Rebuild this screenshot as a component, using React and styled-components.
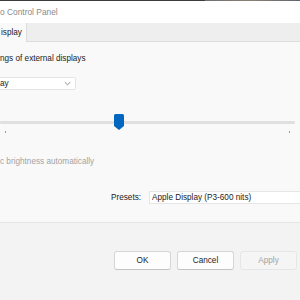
import React from 'react';
import styled, { createGlobalStyle } from 'styled-components';

const GlobalStyle = createGlobalStyle`
    html, body {
        margin: 0;
        padding: 0;
        background: #f9f9f9;
        overflow: hidden;
    }
    body {
        font-family: "Liberation Sans", Arial, sans-serif;
        font-size: 8.2px;
        color: #1b1b1b;
    }
`;

const Window = styled.div`
    width: 300px;
    height: 300px;
    display: flex;
    flex-direction: column;
    background: #f9f9f9;
    overflow: hidden;
`;

const TopEdge = styled.div`
    height: 1px;
    flex: none;
    background: linear-gradient(to right, #3b3b3b 0, #3b3b3b 205px, #6d6f78 205px, #8a8070 250px, #5d6470 300px);
`;

const TitleBar = styled.div`
    height: 22px;
    flex: none;
    display: flex;
    align-items: center;
    background: #ffffff;
    color: #8b8b8b;
    font-size: 8.4px;
    padding-left: 0;
    white-space: nowrap;
`;

const TabStrip = styled.div`
    height: 18px;
    flex: none;
    display: flex;
    background: #eeeeee;
    border-bottom: 1px solid #dedede;
`;

const Tab = styled.div`
    display: flex;
    align-items: center;
    padding: 0 4px 0 1px;
    background: #f9f9f9;
    border-right: 1px solid #dcdcdc;
    margin-bottom: -1px;
`;

const Body = styled.div`
    flex: 1;
    display: flex;
    flex-direction: column;
`;

const Heading = styled.div`
    line-height: 12px;
    margin-top: 11px;
    white-space: nowrap;
`;

const Dropdown = styled.div`
    width: 76px;
    height: 13px;
    margin-top: 12px;
    box-sizing: border-box;
    display: flex;
    align-items: center;
    justify-content: space-between;
    padding: 0 4px 0 0;
    background: #ffffff;
    border: 1px solid #e4e4e4;
    border-left: none;
    border-radius: 0 2px 2px 0;
`;

const SliderWrap = styled.div`
    width: 295px;
    margin-top: 23px;
    display: flex;
    flex-direction: column;
`;

const Track = styled.div`
    position: relative;
    height: 18px;
    display: flex;
    align-items: center;
`;

const Rail = styled.div`
    width: 100%;
    height: 3px;
    border-radius: 1px;
    background: #e0e0e0;
`;

const Thumb = styled.svg`
    position: absolute;
    top: 1px;
    width: 10px;
    height: 16px;
    margin-left: -5px;
`;

const Ticks = styled.div`
    display: flex;
    justify-content: space-between;
    padding: 0 5px;
    margin-top: 0;
`;

const Tick = styled.span`
    width: 1px;
    height: 2px;
    background: #9a9a9a;
`;

const AutoLabel = styled.div`
    color: #a3a3a3;
    line-height: 12px;
    margin-top: 23px;
    white-space: nowrap;
`;

const PresetRow = styled.div`
    display: flex;
    align-items: center;
    margin-top: 23px;
    padding-left: 111px;
`;

const PresetLabel = styled.span`
    width: 38px;
`;

const PresetBox = styled.div`
    flex: 1;
    height: 13px;
    box-sizing: border-box;
    display: flex;
    align-items: center;
    padding-left: 2px;
    background: #ffffff;
    border: 1px solid #e6e6e6;
    border-right: none;
`;

const Footer = styled.div`
    height: 78px;
    flex: none;
    box-sizing: border-box;
    display: flex;
    justify-content: flex-end;
    align-items: flex-start;
    gap: 6px;
    padding: 28px 3px 0 0;
    background: #f3f3f3;
    border-top: 1px solid #e5e5e5;
`;

const Button = styled.div`
    width: 57px;
    height: 19px;
    box-sizing: border-box;
    display: flex;
    align-items: center;
    justify-content: center;
    border-radius: 3px;
    background: ${p => (p.disabled ? '#f5f5f5' : '#fdfdfd')};
    color: ${p => (p.disabled ? '#a2a2a2' : '#1b1b1b')};
    border: 1px solid ${p => (p.disabled ? '#e6e6e6' : '#d6d6d6')};
    border-bottom-color: ${p => (p.disabled ? '#e6e6e6' : '#c4c4c4')};
`;

function Chevron() {
    return (
        <svg width="7" height="5" viewBox="0 0 7 5">
            <path d="M0.8 1.2 L3.5 3.8 L6.2 1.2" fill="none" stroke="#7d7d7d" strokeWidth="0.9" />
        </svg>
    );
}

export default function App() {
    const brightness = 40;

    return (
        <Window>
            <GlobalStyle />
            <TopEdge />
            <TitleBar>o Control Panel</TitleBar>
            <TabStrip>
                <Tab>isplay</Tab>
            </TabStrip>
            <Body>
                <Heading>ngs of external displays</Heading>
                <Dropdown>
                    <span>ay</span>
                    <Chevron />
                </Dropdown>
                <SliderWrap>
                    <Track>
                        <Rail />
                        <Thumb
                            viewBox="0 0 10 16"
                            style={{ left: `calc(5px + ${brightness}% * 285 / 295)` }}
                        >
                            <path d="M1.5 0 H8.5 Q10 0 10 1.5 V12 L5 16 L0 12 V1.5 Q0 0 1.5 0 Z" fill="#0067c0" />
                        </Thumb>
                    </Track>
                    <Ticks>
                        <Tick />
                        <Tick />
                    </Ticks>
                </SliderWrap>
                <AutoLabel>c brightness automatically</AutoLabel>
                <PresetRow>
                    <PresetLabel>Presets:</PresetLabel>
                    <PresetBox>Apple Display (P3-600 nits)</PresetBox>
                </PresetRow>
            </Body>
            <Footer>
                <Button>OK</Button>
                <Button>Cancel</Button>
                <Button disabled>Apply</Button>
            </Footer>
        </Window>
    );
}
